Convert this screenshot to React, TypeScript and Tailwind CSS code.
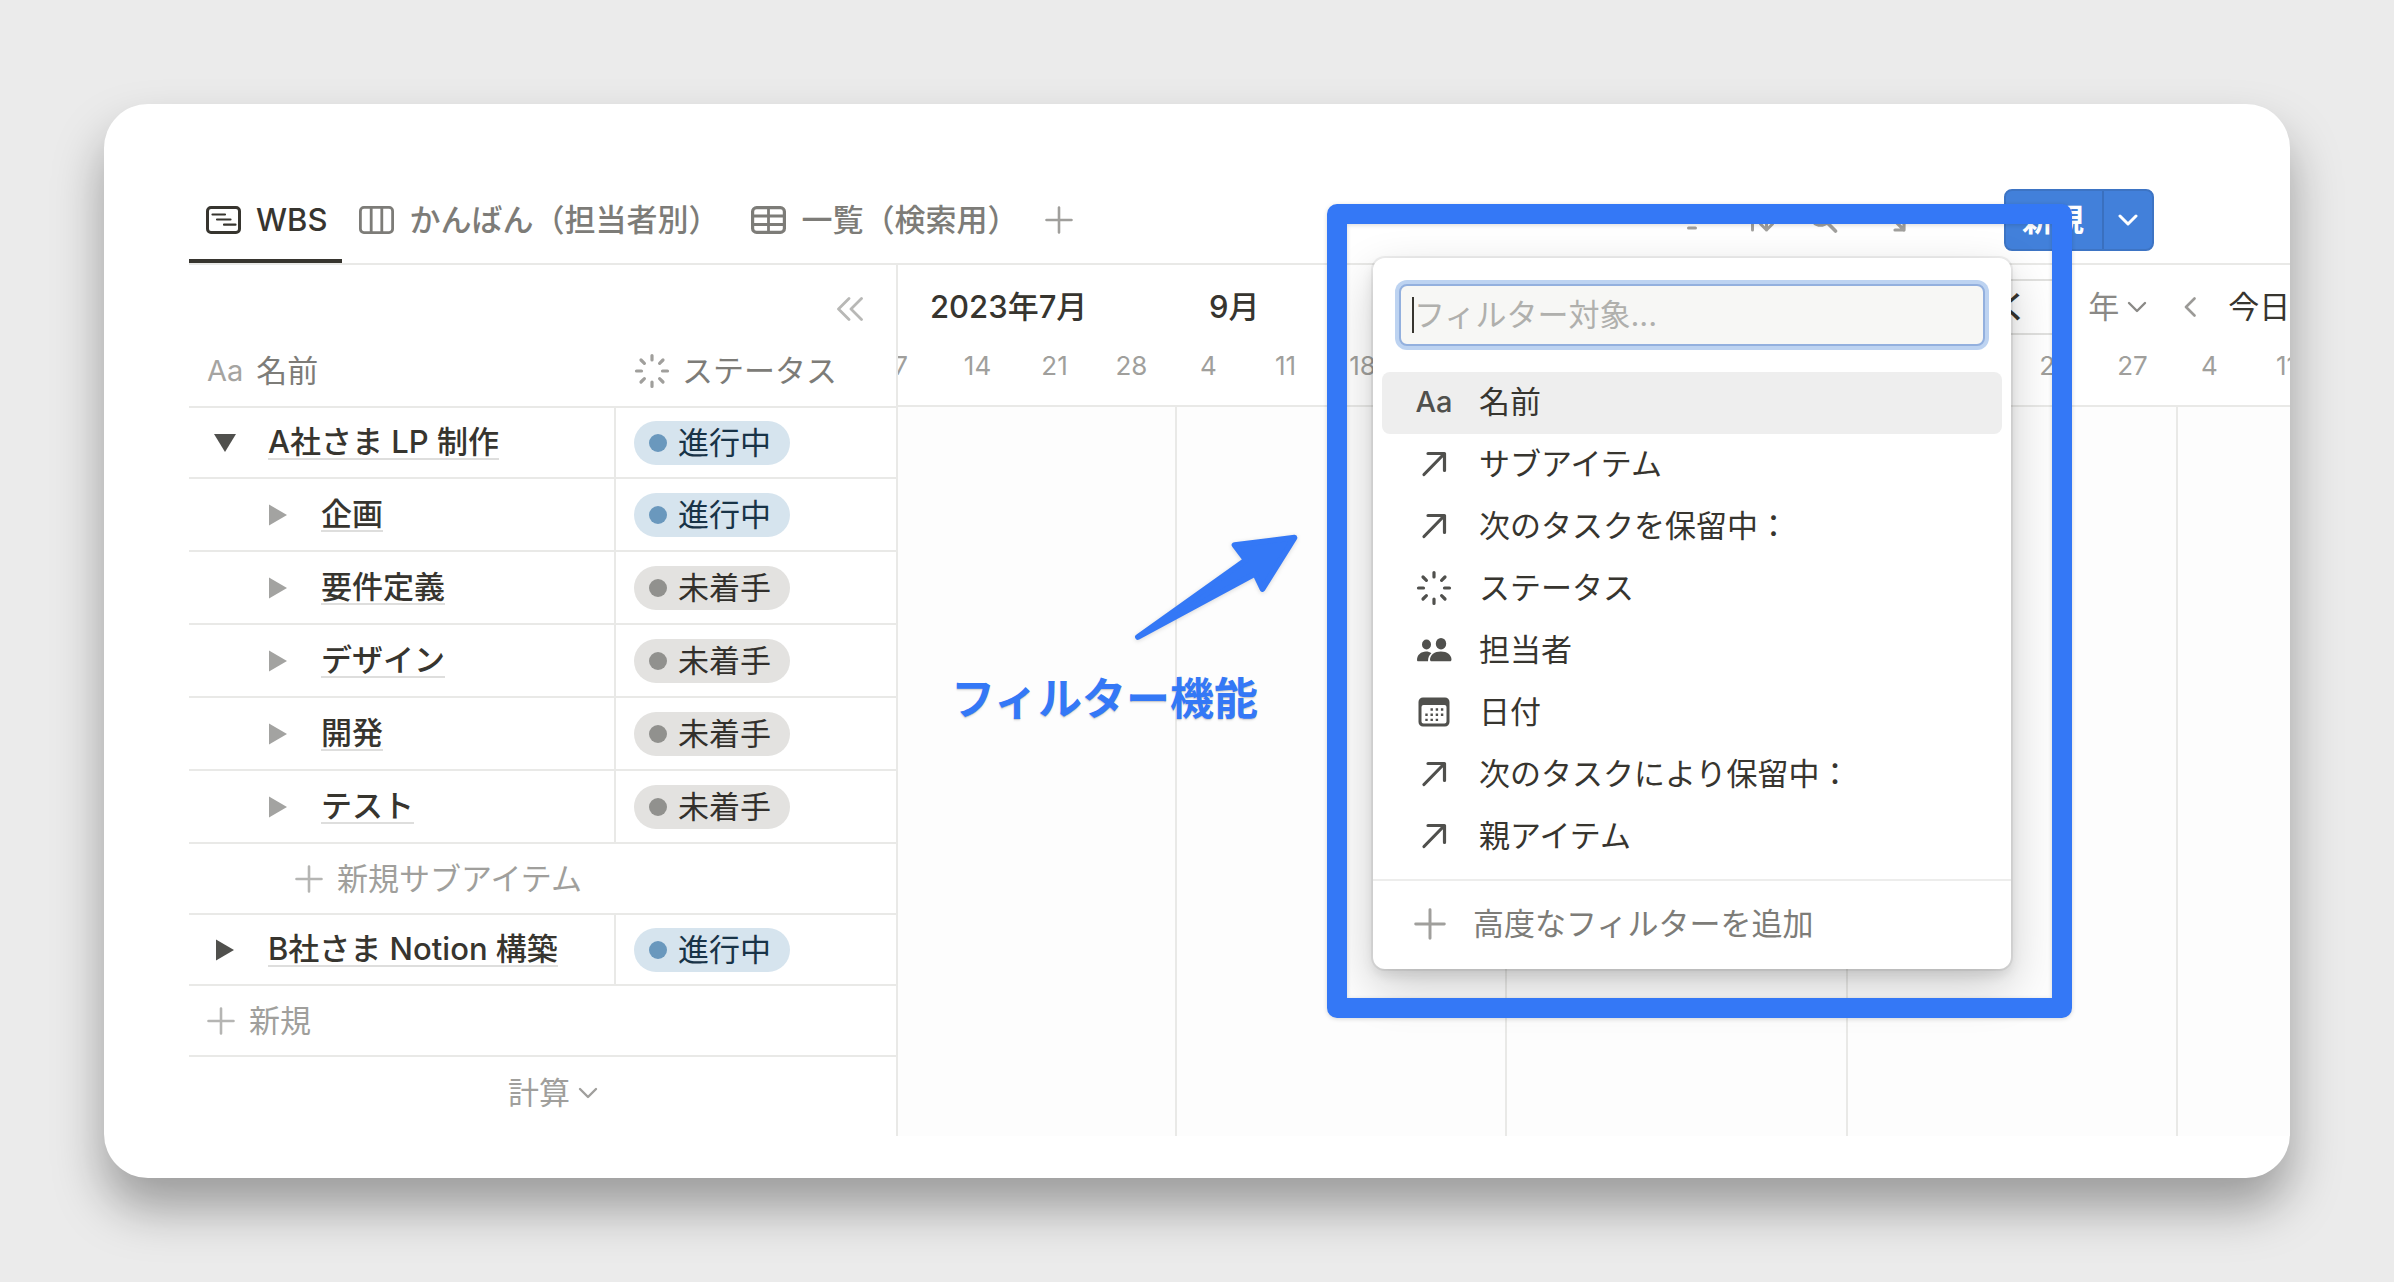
import type { ReactNode } from 'react';

type Status = 'progress' | 'todo';

const statusStyles = {
  progress: { label: '進行中', chip: 'bg-[#d6e4ee] text-[#183347]', dot: 'bg-[#6a98bd]' },
  todo: { label: '未着手', chip: 'bg-[#e3e2e0] text-[#32302c]', dot: 'bg-[#91918e]' },
};

const tasks: { name: string; status: Status }[] = [
  { name: '企画', status: 'progress' },
  { name: '要件定義', status: 'todo' },
  { name: 'デザイン', status: 'todo' },
  { name: '開発', status: 'todo' },
  { name: 'テスト', status: 'todo' },
];

// Later months have no label: the timeline controls sit in their place
const months = [
  { id: 'jul', label: '2023年7月', width: 'w-[279px]' },
  { id: 'sep', label: '9月', width: 'w-[330px]' },
  { id: 'oct', label: '', width: 'w-[341px]' },
  { id: 'nov', label: '', width: 'w-[330px]' },
  { id: 'dec', label: '', width: 'w-[341px]' },
];

const weeks = [7, 14, 21, 28, 4, 11, 18, 25, 2, 9, 16, 23, 30, 6, 13, 20, 27, 4, 11];

function TimelineIcon() {
  return (
    <svg className="w-[35px] h-7 shrink-0" viewBox="0 0 35 28" fill="none" stroke="currentColor" strokeLinecap="round">
      <rect x="1.5" y="1.5" width="32" height="25" rx="3.5" strokeWidth="3" />
      <path d="M6.5 8.5h12.5M11 13.5h13.5M18 18.7h11.5" strokeWidth="2.2" />
    </svg>
  );
}

function BoardIcon() {
  return (
    <svg className="w-[35px] h-7 shrink-0" viewBox="0 0 35 28" fill="none" stroke="currentColor" strokeWidth="2.8">
      <rect x="1.4" y="1.4" width="32.2" height="25.2" rx="3.5" />
      <path d="M12.2 1.5v25M22.8 1.5v25" />
    </svg>
  );
}

function TableIcon() {
  return (
    <svg className="w-[35px] h-7 shrink-0" viewBox="0 0 35 28" fill="none" stroke="currentColor" strokeWidth="3.2">
      <rect x="1.6" y="1.6" width="31.8" height="24.8" rx="4" />
      <path d="M17.5 1.5v25M1.5 10h32M1.5 18.5h32" strokeWidth="2.8" />
    </svg>
  );
}

function StatusIcon() {
  return (
    <svg className="w-9 h-9 shrink-0" viewBox="0 0 36 36" fill="none" stroke="currentColor" strokeWidth="3.2" strokeLinecap="round">
      <path d="M18 2.5v4.5M18 29v4.5M2.5 18h5M28.5 18h5M7 7l3.4 3.4M25.6 25.6l3.4 3.4M7 29l3.4-3.4M25.6 10.4L29 7" />
    </svg>
  );
}

function PlusIcon({ className }: { className: string }) {
  return (
    <svg className={className} viewBox="0 0 28 28" fill="none" stroke="currentColor" strokeWidth="2.6" strokeLinecap="round">
      <path d="M14 1.5v25M1.5 14h25" />
    </svg>
  );
}

function ChevronDown({ className }: { className: string }) {
  return (
    <svg className={className} viewBox="0 0 20 14" fill="none" stroke="currentColor" strokeLinecap="round" strokeLinejoin="round">
      <path d="M2 3l8 8 8-8" />
    </svg>
  );
}

function RelationIcon() {
  return (
    <svg className="w-9 h-9" viewBox="0 0 36 36" fill="none" stroke="currentColor" strokeWidth="3.2" strokeLinecap="round" strokeLinejoin="round">
      <path d="M8 28.5L28 8M12 7.5h16.5V24.5" />
    </svg>
  );
}

function PeopleIcon() {
  return (
    <svg className="w-9 h-9" viewBox="0 0 36 36" fill="currentColor">
      <ellipse cx="10.5" cy="12.5" rx="4.5" ry="5" />
      <ellipse cx="25" cy="11.7" rx="5.2" ry="5.8" />
      <path d="M1 28c0-5 4-8.500 9-8.500 2.200 0 4 .6 5.400 1.700C13.200 23 12 25.500 12 29.300H2.300C1.500 29.300 1 28.800 1 28z" />
      <path d="M14 27.800c0-5 4.500-8.300 10.800-8.300S35.500 22.800 35.500 27.800c0 .9-.6 1.500-1.500 1.500H15.500c-.9 0-1.500-.6-1.500-1.500z" />
    </svg>
  );
}

function CalendarIcon() {
  return (
    <svg className="w-9 h-9" viewBox="0 0 36 36" fill="currentColor">
      <path
        fillRule="evenodd"
        d="M7 3.500h22a4.500 4.500 0 0 1 4.500 4.500v20a4.500 4.500 0 0 1-4.500 4.500H7A4.500 4.500 0 0 1 2.500 28V8A4.500 4.500 0 0 1 7 3.500zM7.500 11a2 2 0 0 0-2 2v14.500a2 2 0 0 0 2 2h21a2 2 0 0 0 2-2V13a2 2 0 0 0-2-2z"
      />
      <path
        fill="none"
        stroke="currentColor"
        strokeWidth="2.4"
        strokeDasharray="2.4 2.8"
        d="M14.500 15.500h13M9.300 20.700h18.200M9.300 25.900h13"
      />
    </svg>
  );
}

const filterItems: { label: string; icon: ReactNode }[] = [
  { label: '名前', icon: <span className="text-[29px] font-medium">Aa</span> },
  { label: 'サブアイテム', icon: <RelationIcon /> },
  { label: '次のタスクを保留中：', icon: <RelationIcon /> },
  { label: 'ステータス', icon: <StatusIcon /> },
  { label: '担当者', icon: <PeopleIcon /> },
  { label: '日付', icon: <CalendarIcon /> },
  { label: '次のタスクにより保留中：', icon: <RelationIcon /> },
  { label: '親アイテム', icon: <RelationIcon /> },
];

function StatusChip({ status }: { status: Status }) {
  const s = statusStyles[status];
  return (
    <span className={`inline-flex h-11 items-center gap-[11px] rounded-full pl-[15px] pr-[19px] align-middle ${s.chip}`}>
      <span className={`size-[18px] rounded-full ${s.dot}`} />
      {s.label}
    </span>
  );
}

function TaskRow({ name, status, open, child }: { name: string; status: Status; open?: boolean; child?: boolean }) {
  return (
    <tr className={child ? 'h-[73px]' : 'h-[71px]'}>
      <td className={`border-b-2 border-r-2 border-[#e9e9e7] ${child ? 'pl-[71px]' : 'pl-[18px]'}`}>
        <div className="flex items-center gap-[26px]">
          <button
            aria-label={open ? '閉じる' : '開く'}
            aria-expanded={!!open}
            className={`flex w-[35px] justify-center ${child ? 'text-[#a3a3a1]' : 'text-[#50504d]'}`}
          >
            <svg className="size-[22px]" viewBox="0 0 22 22" fill="currentColor">
              {open ? <path d="M0 2h22L11 20z" /> : <path d="M2 0.5v21L20 11z" />}
            </svg>
          </button>
          <a href="#" className="border-b-2 border-[#dededd] font-medium leading-8">{name}</a>
        </div>
      </td>
      <td className="border-b-2 border-[#e9e9e7] pl-[18px]">
        <StatusChip status={status} />
      </td>
    </tr>
  );
}

function TaskTable() {
  return (
    <table className="w-[707px] shrink-0 table-fixed border-separate border-spacing-0 text-left">
      <colgroup>
        <col className="w-[427px]" />
        <col />
      </colgroup>
      <thead className="text-[#7d7c78]">
        <tr className="h-[71px]">
          <td colSpan={2} className="pr-[33px] pt-3 text-right">
            <button aria-label="表を閉じる" className="align-middle text-[#b8b8b6]">
              <svg className="h-6 w-[26px]" viewBox="0 0 26 24" fill="none" stroke="currentColor" strokeWidth="2.8" strokeLinecap="round" strokeLinejoin="round">
                <path d="M12 1.5L1.5 12 12 22.5M24.5 1.5L14 12l10.5 10.5" />
              </svg>
            </button>
          </td>
        </tr>
        <tr className="h-[72px]">
          <th className="border-b-2 border-[#e9e9e7] pl-[18px] font-normal">
            <div className="flex items-center gap-[13px]">
              <span className="text-[29px] text-[#a5a4a1]">Aa</span>名前
            </div>
          </th>
          <th className="border-b-2 border-[#e9e9e7] pl-[18px] font-normal">
            <div className="flex items-center gap-3">
              <span className="text-[#a09f9c]"><StatusIcon /></span>ステータス
            </div>
          </th>
        </tr>
      </thead>
      <tbody>
        <TaskRow name="A社さま LP 制作" status="progress" open />
        {tasks.map(task => (
          <TaskRow key={task.name} name={task.name} status={task.status} child />
        ))}
        <tr className="h-[71px]">
          <td colSpan={2} className="border-b-2 border-[#e9e9e7] pl-[106px]">
            <button className="flex items-center gap-[14px] text-[#a09f9c]">
              <PlusIcon className="size-7 text-[#b5b5b3]" />新規サブアイテム
            </button>
          </td>
        </tr>
        <TaskRow name="B社さま Notion 構築" status="progress" />
        <tr className="h-[71px]">
          <td colSpan={2} className="border-b-2 border-[#e9e9e7] pl-[18px]">
            <button className="flex items-center gap-[14px] text-[#a09f9c]">
              <PlusIcon className="size-7 text-[#b5b5b3]" />新規
            </button>
          </td>
        </tr>
        <tr className="h-[79px]">
          <td className="pb-2 pr-[18px]">
            <button className="ml-auto flex items-center gap-2 text-[#a09f9c]">
              計算<ChevronDown className="h-[14px] w-5 stroke-[2.4]" />
            </button>
          </td>
          <td />
        </tr>
      </tbody>
    </table>
  );
}

function Timeline() {
  return (
    <div className="flex min-w-0 flex-1 flex-col overflow-hidden border-l-2 border-[#e9e9e7]">
      <div className="relative border-b-2 border-[#e9e9e7] pb-[22px]">
        <div className="flex h-[84px] items-center font-medium">
          {months.map(m => (
            <div key={m.id} className={`shrink-0 pl-8 ${m.width}`}>{m.label}</div>
          ))}
        </div>
        <div className="-ml-9 flex h-[34px] items-center text-[26px] text-[#a09f9c]">
          {weeks.map((w, i) => (
            <div key={i} className="w-[77px] shrink-0 text-center">{w}</div>
          ))}
        </div>
        {/* Controls float over the month labels */}
        <div className="absolute right-0 top-0 flex h-[84px] w-[540px] items-center overflow-hidden whitespace-nowrap bg-white">
          <button className="h-14 shrink-0 rounded-lg border-2 border-[#e1e1df] px-[30px] font-medium">カレンダーで開く</button>
          <button className="ml-7 flex shrink-0 items-center gap-2 text-[#8a8986]">
            年<ChevronDown className="h-[14px] w-5 stroke-[2.4]" />
          </button>
          <button aria-label="前へ" className="ml-[37px] shrink-0 text-[#9b9a97]">
            <svg className="h-5 w-3" viewBox="0 0 12 20" fill="none" stroke="currentColor" strokeWidth="2.6" strokeLinecap="round" strokeLinejoin="round">
              <path d="M10.5 1.5L2 10l8.5 8.5" />
            </svg>
          </button>
          <button className="ml-8 shrink-0">今日</button>
        </div>
      </div>
      <div className="flex flex-1 bg-[#fdfdfd]">
        {months.map(m => (
          <div key={m.id} className={`shrink-0 border-r-2 border-[#e9e9e7] ${m.width}`} />
        ))}
      </div>
    </div>
  );
}

function Toolbar() {
  return (
    <div className="ml-auto flex items-center pr-[136px] pt-[3px] text-[#a09f9c]">
      <div className="flex items-center gap-6 pr-[94px]">
        <button aria-label="フィルター">
          <svg className="size-7" viewBox="0 0 28 28" stroke="currentColor" strokeWidth="3" strokeLinecap="round">
            <path d="M2 4h24M6 13h16M10.5 22h7" />
          </svg>
        </button>
        <button aria-label="並べ替え" className="ml-4">
          <svg className="size-7" viewBox="0 0 28 28" fill="none" stroke="currentColor" strokeWidth="3" strokeLinecap="round" strokeLinejoin="round">
            <path d="M6.500 24V3M1.500 8l5-5 5 5M20.500 3v21M14.500 18l6 6 6-6" />
          </svg>
        </button>
        <button aria-label="検索" className="ml-3">
          <svg className="size-7" viewBox="0 0 28 28" fill="none" stroke="currentColor" strokeWidth="3.6" strokeLinecap="round">
            <circle cx="10.5" cy="10" r="9" />
            <path d="M17 16.500l8.500 8.500" />
          </svg>
        </button>
        <button aria-label="全画面" className="ml-5">
          <svg className="size-7" viewBox="0 0 28 28" fill="none" stroke="currentColor" strokeWidth="3.2" strokeLinecap="round" strokeLinejoin="round">
            <path d="M4 13V4h9M4 4l7 7M13 24h9V15M22 24l-7-7" />
          </svg>
        </button>
      </div>
      <div className="flex h-[62px] overflow-hidden rounded-lg border-2 border-[#3d74c4] bg-[#4280da] text-white">
        <button className="border-r-2 border-[#3a70bf] pl-4 pr-[18px] font-semibold">新規</button>
        <button aria-label="テンプレート" className="px-[14px]">
          <ChevronDown className="h-[14px] w-5 stroke-3" />
        </button>
      </div>
    </div>
  );
}

function ViewTab({ icon, label, active }: { icon: ReactNode; label: string; active?: boolean }) {
  return (
    <button
      role="tab"
      aria-selected={!!active}
      className={`flex items-center gap-[15px] border-y-4 border-transparent pl-[17px] pr-[15px] pt-[3px] font-medium ${
        active ? 'border-b-[#37352f] text-[#37352f]' : 'text-[#7d7c78]'
      }`}
    >
      {icon}
      {label}
    </button>
  );
}

function FilterMenu() {
  return (
    <div className="absolute right-[279px] top-[154px] w-[638px] rounded-xl bg-white pt-[26px] shadow-[0_0_0_2px_rgba(15,15,15,0.06),0_6px_12px_rgba(15,15,15,0.1),0_18px_48px_rgba(15,15,15,0.2)]">
      <div className="mx-[26px] flex h-[62px] items-center rounded-lg border-2 border-[#93b0de] bg-[#f7f7f5] pl-[11px] ring-4 ring-[#bdd3f1]">
        <span className="h-9 w-0.5 bg-[#37352f]" />
        <input
          type="text"
          aria-label="フィルター対象"
          placeholder="フィルター対象..."
          className="min-w-0 flex-1 bg-transparent outline-none placeholder:text-[#b0b0ad]"
        />
      </div>
      <ul className="mt-[26px] px-[9px] pb-[11px]">
        {filterItems.map((item, i) => (
          <li key={item.label}>
            <button className={`flex h-[62px] w-full items-center gap-[27px] rounded-lg pb-0.5 pl-[34px] text-left ${i === 0 ? 'bg-[#eeeeee]' : ''}`}>
              <span className="flex w-9 justify-center text-[#50504d]">{item.icon}</span>
              {item.label}
            </button>
          </li>
        ))}
      </ul>
      <div className="border-t-2 border-[#ededec]">
        <button className="flex h-[88px] w-full items-center gap-[27px] pb-0.5 pl-[41px] text-[#7d7c78]">
          <PlusIcon className="size-8 text-[#a09f9c]" />
          高度なフィルターを追加
        </button>
      </div>
    </div>
  );
}

export default function App() {
  return (
    <div className="min-h-screen bg-[#ebebeb] p-[104px] font-['Inter','Noto_Sans_CJK_JP',sans-serif] text-[31px] leading-9 text-[#37352f]">
      <main className="relative overflow-hidden rounded-[44px] bg-white pb-[42px] pt-[69px] shadow-[0_30px_50px_rgba(0,0,0,0.34)]">
        <header className="ml-[85px] flex h-[92px] border-b-2 border-[#e9e9e7]">
          <div role="tablist" className="flex">
            <ViewTab icon={<TimelineIcon />} label="WBS" active />
            <ViewTab icon={<BoardIcon />} label="かんばん（担当者別）" />
            <ViewTab icon={<TableIcon />} label="一覧（検索用）" />
          </div>
          <button aria-label="ビューを追加" className="ml-3 pt-[3px] text-[#a09f9c]">
            <PlusIcon className="size-7" />
          </button>
          <Toolbar />
        </header>

        <div className="ml-[85px] flex">
          <TaskTable />
          <Timeline />
        </div>

        <FilterMenu />

        {/* Callout: frame, arrow and caption */}
        <div className="pointer-events-none absolute right-[218px] top-[100px] h-[814px] w-[745px] rounded-[10px] border-20 border-[#3478f6] drop-shadow-sm" />
        <svg className="pointer-events-none absolute right-[990px] top-[429px] h-[110px] w-[167px] drop-shadow-sm" viewBox="640 100 500 330">
          <path
            d="M654 412L978 181L944 136L1124 114L1028 268L1006 222Z"
            fill="#3478f6"
            stroke="#3478f6"
            strokeWidth="17"
            strokeLinejoin="round"
          />
        </svg>
        <p className="absolute right-[1032px] top-[571px] text-[44px] font-bold leading-12 text-[#3478f6] text-shadow-sm">
          フィルター機能
        </p>
      </main>
    </div>
  );
}
